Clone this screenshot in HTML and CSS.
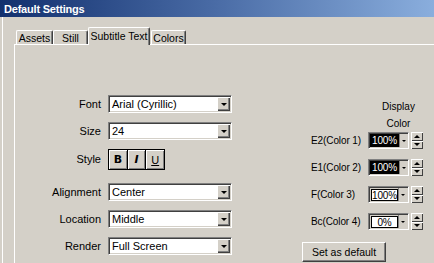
FILE: index.html
```html
<!DOCTYPE html>
<html>
<head>
<meta charset="utf-8">
<title>Default Settings</title>
<link rel="stylesheet" href="styles.css">
</head>
<body>
<div class="window">
  <div class="titlebar"><span class="title">Default Settings</span></div>
  <div class="client">
    <div class="tabs">
      <div class="tab t-assets">Assets</div>
      <div class="tab t-still">Still</div>
      <div class="tab active t-sub">Subtitle Text</div>
      <div class="tab t-colors">Colors</div>
    </div>
    <div class="panel">
      <div class="form">
        <span class="lbl">Font</span>
        <div class="combo"><span class="val">Arial (Cyrillic)</span><span class="dd"><i class="arr"></i></span></div>
        <span class="lbl">Size</span>
        <div class="combo"><span class="val">24</span><span class="dd"><i class="arr"></i></span></div>
        <span class="lbl lbl-style">Style</span>
        <div class="styles">
          <span class="sbtn sb-b">B</span>
          <span class="sbtn sb-i">I</span>
          <span class="sbtn sb-u">U</span>
        </div>
        <span class="lbl">Alignment</span>
        <div class="combo"><span class="val">Center</span><span class="dd"><i class="arr"></i></span></div>
        <span class="lbl">Location</span>
        <div class="combo"><span class="val">Middle</span><span class="dd"><i class="arr"></i></span></div>
        <span class="lbl">Render</span>
        <div class="combo"><span class="val">Full Screen</span><span class="dd"><i class="arr"></i></span></div>
      </div>
      <div class="colors">
        <div class="hdr"><div>Display</div><div>Color</div></div>
        <div class="crow">
          <span class="clbl">E2(Color 1)</span>
          <div class="cbox"><span class="cfield dark">100%</span><span class="cdd"><i class="sarr"></i></span></div>
          <div class="spin"><span class="sp up"><i></i></span><span class="sp dn"><i></i></span></div>
        </div>
        <div class="crow">
          <span class="clbl">E1(Color 2)</span>
          <div class="cbox"><span class="cfield dark">100%</span><span class="cdd"><i class="sarr"></i></span></div>
          <div class="spin"><span class="sp up"><i></i></span><span class="sp dn"><i></i></span></div>
        </div>
        <div class="crow">
          <span class="clbl">F(Color 3)</span>
          <div class="cbox"><span class="cfield light">100%</span><span class="cdd"><i class="sarr"></i></span></div>
          <div class="spin"><span class="sp up"><i></i></span><span class="sp dn"><i></i></span></div>
        </div>
        <div class="crow">
          <span class="clbl">Bc(Color 4)</span>
          <div class="cbox"><span class="cfield light">0%</span><span class="cdd"><i class="sarr"></i></span></div>
          <div class="spin"><span class="sp up"><i></i></span><span class="sp dn"><i></i></span></div>
        </div>
        <div class="btn">Set as default</div>
      </div>
    </div>
  </div>
</div>
</body>
</html>
```
FILE: styles.css
```css
* { box-sizing: border-box; }
html, body { margin: 0; padding: 0; }
body {
  width: 434px;
  height: 263px;
  overflow: hidden;
  background: #d4d0c8;
  font-family: "Liberation Sans", Arial, sans-serif;
  font-size: 11px;
  color: #000;
}
.window { width: 434px; height: 263px; }
.titlebar {
  height: 17px;
  background: linear-gradient(to right, #12306e 0%, #4a6ca6 50%, #8aaedd 100%);
  display: flex;
  align-items: center;
  padding-left: 4px;
}
.title {
  color: #fff;
  font-weight: bold;
  font-size: 11px;
  letter-spacing: -0.2px;
}
.client {
  margin-left: 2px;
  border-left: 1px solid #fff;
  padding-left: 11px;
  height: 246px;
  display: flex;
  flex-direction: column;
}
.tabs {
  margin-top: 10px;
  height: 17px;
  display: flex;
  align-items: flex-end;
  padding-left: 2px;
  font-size: 10.5px;
}
.tab {
  height: 14px;
  border-top: 1px solid #fff;
  border-left: 1px solid #fff;
  border-right: 1px solid #404040;
  box-shadow: inset -1px 0 #808080;
  border-top-left-radius: 2px;
  border-top-right-radius: 2px;
  display: flex;
  align-items: center;
  justify-content: center;
  line-height: 12px;
  background: #d4d0c8;
}
.t-assets { width: 37px; }
.t-still { width: 35px; }
.t-sub { width: 62px; }
.t-colors { width: 35px; margin-left: 1px; }
.tab.active {
  height: 18px;
  margin-bottom: -1px;
  position: relative;
  z-index: 1;
  padding-bottom: 2px;
}
.panel {
  flex: 1;
  border-top: 1px solid #fff;
  border-left: 1px solid #fff;
  display: grid;
  grid-template-columns: 217px 1fr;
  column-gap: 70px;
}
.form {
  padding-top: 50px;
  display: grid;
  grid-template-columns: 86px 124px;
  grid-template-rows: 18px 18px 25px 18px 18px 18px;
  column-gap: 7px;
  row-gap: 9px;
  align-content: start;
}
.lbl {
  text-align: right;
  align-self: center;
  line-height: 14px;
}
.lbl-style { align-self: start; margin-top: 3px; }
.combo {
  height: 18px;
  border-top: 1px solid #808080;
  border-left: 1px solid #808080;
  border-bottom: 1px solid #fff;
  border-right: 1px solid #fff;
  box-shadow: inset 1px 1px #404040, inset -1px -1px #d4d0c8;
  background: #fff;
  display: flex;
  align-items: center;
  padding: 1px;
}
.val {
  flex: 1;
  padding-left: 2px;
  line-height: 14px;
  white-space: nowrap;
  overflow: hidden;
}
.dd {
  width: 13px;
  height: 14px;
  background: #d4d0c8;
  box-shadow: inset 1px 1px #fff, inset -1px -1px #404040, inset -2px -2px #808080;
  display: flex;
  align-items: center;
  justify-content: center;
}
.arr {
  display: block;
  width: 0;
  height: 0;
  border-left: 3px solid transparent;
  border-right: 3px solid transparent;
  border-top: 3px solid #000;
  margin-top: 1px;
}
.styles {
  width: 57px;
  height: 21px;
  border: 1px solid #000;
  display: flex;
  background: #000;
  gap: 1px;
}
.sbtn {
  flex: 1;
  background: #d4d0c8;
  box-shadow: inset 1px 1px #fff, inset -1px -1px #808080;
  display: flex;
  align-items: center;
  justify-content: center;
  font-weight: bold;
  font-size: 11px;
}
.sb-b { font-family: "DejaVu Sans", sans-serif; font-weight: 900; }
.sb-i { font-style: italic; font-family: "DejaVu Sans", sans-serif; }
.sb-u { text-decoration: underline; font-weight: normal; }
.colors {
  padding-top: 53px;
  display: flex;
  flex-direction: column;
  align-items: flex-start;
  font-size: 10px;
}
.hdr {
  margin-left: 75px;
  width: 43px;
  text-align: center;
  line-height: 17px;
}
.crow {
  margin-top: 0;
  height: 17px;
  display: flex;
  align-items: center;
}
.crow + .crow { margin-top: 10px; }
.clbl {
  width: 66px;
  padding-left: 9px;
  line-height: 14px;
  white-space: nowrap;
  letter-spacing: -0.1px;
}
.cbox {
  width: 41px;
  height: 17px;
  border-top: 1px solid #808080;
  border-left: 1px solid #808080;
  border-bottom: 1px solid #fff;
  border-right: 1px solid #fff;
  box-shadow: inset 1px 1px #404040, inset -1px -1px #d4d0c8;
  background: #d4d0c8;
  display: flex;
  align-items: stretch;
  padding: 1px;
}
.cfield {
  width: 29px;
  display: flex;
  align-items: center;
  justify-content: center;
  overflow: hidden;
  white-space: nowrap;
  font-size: 10px;
  letter-spacing: -0.2px;
}
.cfield.dark { background: #000; color: #fff; }
.cfield.light { background: #fff; color: #000; border: 1px solid #000; margin: 1px 0 0 1px; width: 27px; }
.cdd {
  flex: 1;
  border-left: 1px solid #808080;
  display: flex;
  align-items: center;
  justify-content: center;
}
.sarr {
  display: block;
  width: 0;
  height: 0;
  border-left: 2px solid transparent;
  border-right: 2px solid transparent;
  border-top: 2px solid #000;
}
.spin {
  margin-left: 2px;
  width: 12px;
  height: 17px;
  display: flex;
  flex-direction: column;
}
.sp {
  flex: 1;
  background: #d4d0c8;
  box-shadow: inset 1px 1px #fff, inset -1px -1px #404040;
  display: flex;
  align-items: center;
  justify-content: center;
}
.sp i {
  display: block;
  width: 0;
  height: 0;
  border-left: 3px solid transparent;
  border-right: 3px solid transparent;
}
.sp.up i { border-bottom: 3px solid #000; }
.sp.dn i { border-top: 3px solid #000; }
.btn {
  margin-top: 12px;
  width: 84px;
  height: 20px;
  border-top: 1px solid #fff;
  border-left: 1px solid #fff;
  border-bottom: 1px solid #404040;
  border-right: 1px solid #404040;
  box-shadow: inset -1px -1px #808080;
  display: flex;
  align-items: center;
  justify-content: center;
  font-size: 10.5px;
}
```
